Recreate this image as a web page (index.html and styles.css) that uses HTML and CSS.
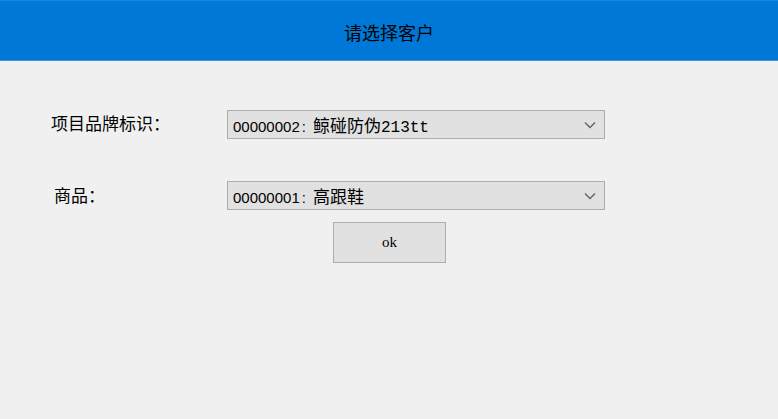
FILE: index.html
```html
<!DOCTYPE html>
<html>
<head>
  <meta charset="utf-8">
  <title>请选择客户</title>
  <link rel="stylesheet" href="styles.css">
</head>
<body>
<div class="header">请选择客户</div>
<div class="content">
  <div class="row">
    <label class="label">项目品牌标识：</label>
    <div class="select">
      <span class="value"><span class="num">00000002</span><span class="colon">:</span><span class="cjk">鲸碰防伪</span><span class="mono">213tt</span></span>
      <svg class="arrow" width="12" height="8" viewBox="0 0 12 8"><path d="M1 1.5 L6 6.5 L11 1.5" fill="none" stroke="#606060" stroke-width="1.3"/></svg>
    </div>
  </div>
  <div class="row row-goods">
    <label class="label label-goods">商品：</label>
    <div class="select">
      <span class="value"><span class="num">00000001</span><span class="colon">:</span><span class="cjk">高跟鞋</span></span>
      <svg class="arrow" width="12" height="8" viewBox="0 0 12 8"><path d="M1 1.5 L6 6.5 L11 1.5" fill="none" stroke="#606060" stroke-width="1.3"/></svg>
    </div>
  </div>
  <div class="buttons">
    <button class="btn-ok">ok</button>
  </div>
</div>
</body>
</html>
```

FILE: styles.css
```css
body {
    margin: 0;
    padding: 0;
    background-color: #f0f0f0;
    font-family: "Noto Sans CJK SC", "Noto Sans", sans-serif;
    width: 778px;
    height: 419px;
    overflow: hidden;
}

.header {
    height: 57px;
    padding-top: 2px;
    background-color: #0078d7;
    border-top: 1px solid #1a86dc;
    border-bottom: 1px solid #3d95de;
    color: #000000;
    font-size: 18px;
    display: flex;
    justify-content: center;
    align-items: center;
}

.content {
    padding: 49px 0 0 51px;
}

.row {
    display: flex;
    align-items: center;
}

.row-goods {
    margin-top: 42px;
}

.label {
    width: 176px;
    font-size: 17px;
    color: #000000;
    margin-top: -5px;
}

.label-goods {
    padding-left: 3px;
    width: 173px;
    margin-top: -2px;
}

.select {
    height: 27px;
    width: 371px;
    background-color: #e1e1e1;
    border: 1px solid #adadad;
    display: flex;
    align-items: center;
    justify-content: space-between;
    padding: 0 0 0 5px;
}

.value {
    color: #000000;
    white-space: nowrap;
    display: flex;
    align-items: baseline;
}

.num,
.colon {
    font-family: "Liberation Sans", Arial, sans-serif;
    font-size: 15px;
}

.colon {
    padding: 0 7px 0 2px;
}

.cjk {
    font-size: 17px;
}

.mono {
    font-family: "Liberation Mono", monospace;
    font-size: 16px;
}

.arrow {
    margin-right: 8px;
}

.buttons {
    padding-left: 282px;
    margin-top: 12px;
}

.btn-ok {
    width: 113px;
    height: 41px;
    background-color: #e1e1e1;
    border: 1px solid #adadad;
    font-family: "Liberation Serif", serif;
    font-size: 15px;
    color: #000000;
    padding: 0;
}
```
